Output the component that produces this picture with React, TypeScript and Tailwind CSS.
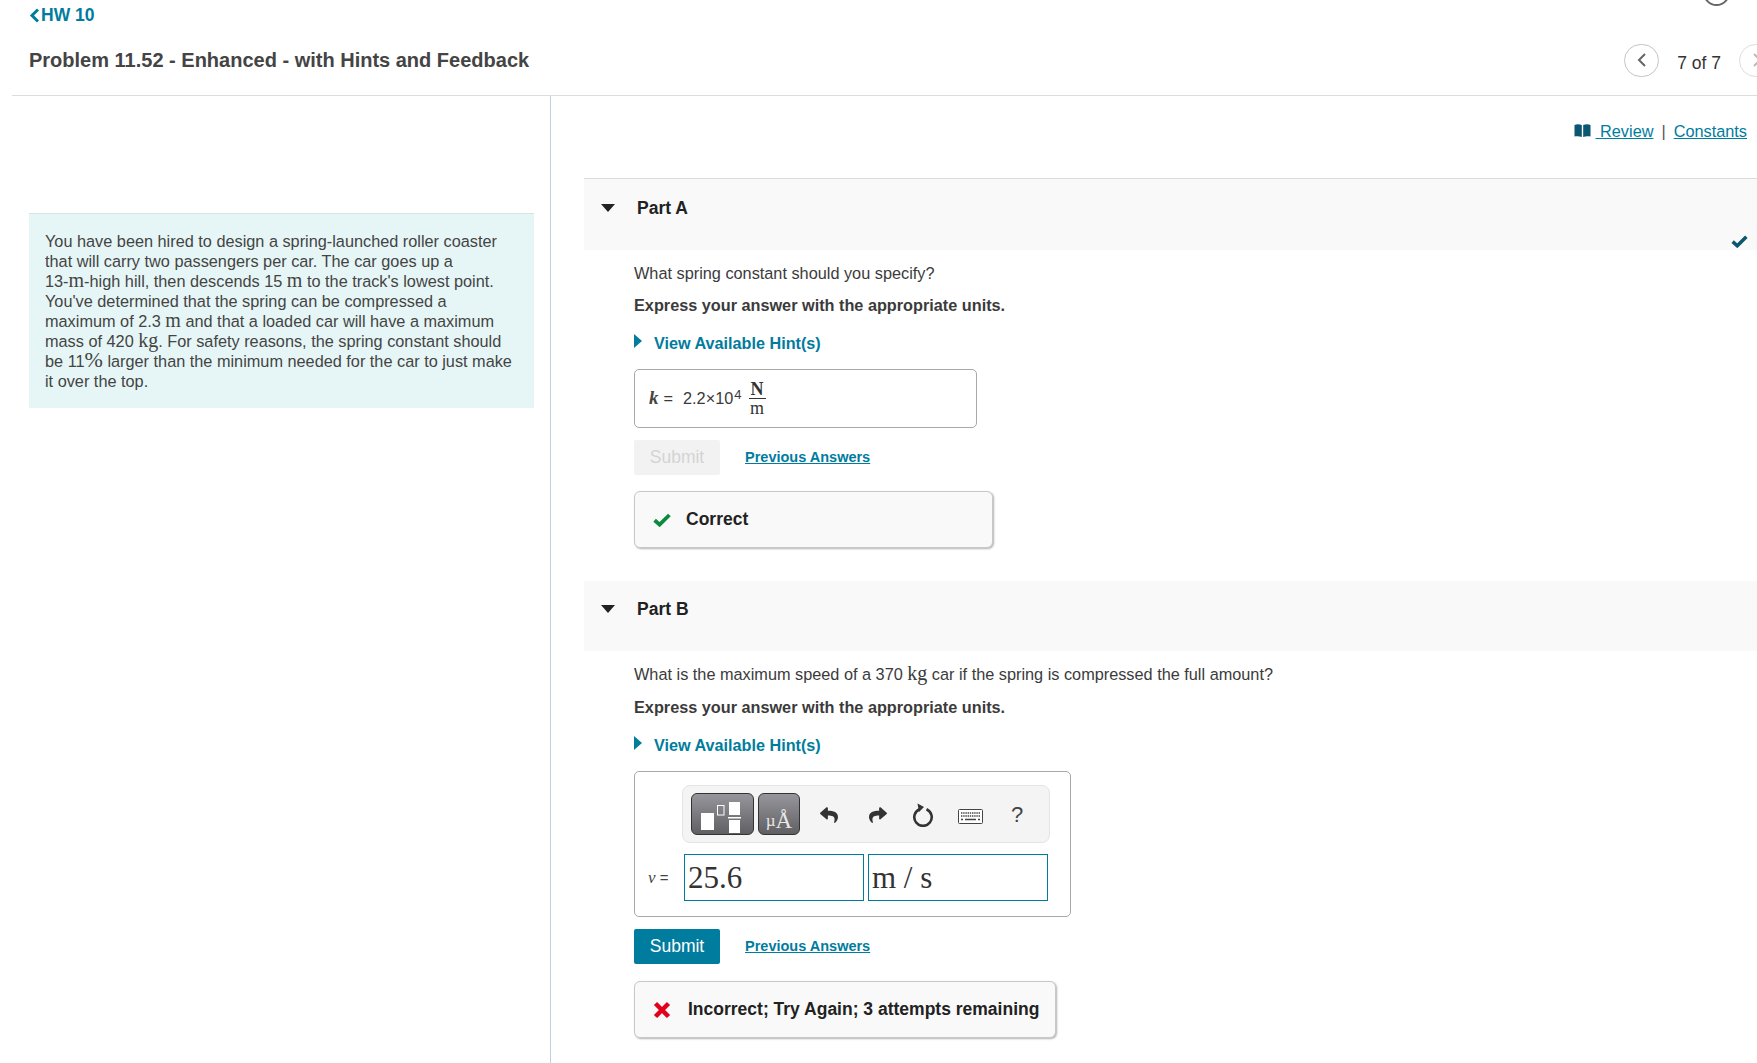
import React from "react";
import { FaReply, FaShare } from "react-icons/fa";

const Unit = ({ children }: { children: React.ReactNode }) => (
  <span className="font-['Liberation_Serif',serif] text-[20px] leading-[0]">{children}</span>
);

const CaretDown = () => (
  <svg width="14" height="8" viewBox="0 0 14 8" className="shrink-0">
    <path d="M0 0h14L7 8z" fill="#222" />
  </svg>
);

const CheckMark = ({ w, h, color }: { w: number; h: number; color: string }) => (
  <svg width={w} height={h} viewBox="0 0 18 14" className="shrink-0">
    <path d="M1.600 7.200L6.600 11.600 16.400 2" fill="none" stroke={color} strokeWidth="3.800" />
  </svg>
);

const Hint = () => (
  <div className="flex items-center h-[20px] mt-[18px]">
    <svg width="8" height="14" viewBox="0 0 8 14" className="shrink-0 -mt-[4px]">
      <path d="M0 0l8 7-8 7z" fill="#007c9e" />
    </svg>
    <a className="ml-[12px] font-bold text-[16.2px] text-[#007c9e]">View Available Hint(s)</a>
  </div>
);

const PartHeader = ({ title, box, done }: { title: string; box: string; done?: boolean }) => (
  <div className={`relative ${box} bg-[#f9f9f9] flex items-start pl-[17px]`}>
    <div className="mt-[6px]">
      <CaretDown />
    </div>
    <span className="ml-[22px] font-bold text-[17.5px] text-[#222] leading-[20px]">{title}</span>
    {done && (
      <div className="absolute right-[9px] bottom-[2px]">
        <CheckMark w={17} h={13} color="#0b5670" />
      </div>
    )}
  </div>
);

const PrevAnswers = () => (
  <a className="ml-[25px] text-[14.500px] font-bold underline text-[#007c9e]">Previous Answers</a>
);

const Feedback = ({ box, icon, iconGap, children }: { box: string; icon: React.ReactNode; iconGap: string; children: React.ReactNode }) => (
  <div className={`${box} h-[57px] flex items-center pl-[18px] rounded-[6px] bg-[#f9f9f9] border border-[#c8c8c8] shadow-[1px_1px_2px_rgba(0,0,0,0.3)]`}>
    {icon}
    <span className={`${iconGap} font-bold text-[17.5px] text-[#222]`}>{children}</span>
  </div>
);

const TemplatesIcon = () => (
  <svg width="61" height="40" viewBox="0 0 61 40">
    <rect x="9" y="19" width="13" height="17" fill="#fff" />
    <rect x="25.5" y="11.5" width="6.500" height="9.500" fill="none" stroke="#fff" strokeWidth="1" />
    <rect x="37" y="8" width="11" height="13" fill="#fff" />
    <rect x="36" y="23" width="13" height="1.500" fill="#fff" />
    <rect x="37" y="26" width="11" height="13" fill="#fff" />
  </svg>
);

const KeyboardIcon = () => (
  <svg width="25" height="15" viewBox="0 0 25 15">
    <rect x="0.5" y="0.5" width="24" height="14" rx="1" fill="#fff" stroke="#444" />
    <path d="M3 4h19M3 7h19" stroke="#444" strokeWidth="1.600" strokeDasharray="1.400 .8" />
    <path d="M3 10.500h2M7 10.500h11M20 10.500h2" stroke="#444" strokeWidth="1.600" />
  </svg>
);

const ResetIcon = () => (
  <svg width="22" height="24" viewBox="0 0 22 24">
    <path d="M7.500 6.200a8.700 8.700 0 1 0 7 0" fill="none" stroke="#333" strokeWidth="2.600" />
    <path d="M5.500 0.500l6.500 3.600-5 5z" fill="#333" />
  </svg>
);

const MathInput = ({ children }: { children: React.ReactNode }) => (
  <div className="w-[180px] h-[47px] border border-[#007c9e] pl-[3px] font-['Liberation_Serif',serif] text-[31px] leading-[45px] text-[#333]">
    {children}
  </div>
);

export default function App() {
  return (
    <div className="relative w-full h-[1063px] overflow-hidden bg-white text-[16.300px] text-[#3b3b3b] font-['Liberation_Sans',Arial,sans-serif]">
      {/* help circle cut off by the top of the page */}
      <div className="absolute left-[1703px] -top-[21px] w-[27px] h-[27px] rounded-full border-2 border-[#666]" />

      <header className="h-[96px] ml-[12px] border-b border-[#dcdcdc] relative">
        <a className="absolute left-[17px] top-[5px] flex items-center font-bold text-[17.500px] text-[#007c9e] leading-[20px]">
          <svg width="11" height="15" viewBox="0 0 11 15">
            <path d="M9 1.500L3 7.500l6 6" fill="none" stroke="#007c9e" strokeWidth="3" />
          </svg>
          <span className="ml-[1px]">HW 10</span>
        </a>
        <div className="flex items-center h-[34px] pt-[43px] box-content pl-[17px]">
          <h1 className="font-bold text-[20px] text-[#444] leading-[34px]">Problem 11.52 - Enhanced - with Hints and Feedback</h1>
          <div className="ml-auto flex items-center">
            <div className="w-[35px] h-[33px] rounded-full border border-[#c4c4c4] flex items-center justify-center">
              <svg width="10" height="16" viewBox="0 0 10 16">
                <path d="M8 2L2 8l6 6" fill="none" stroke="#666" strokeWidth="2" />
              </svg>
            </div>
            <span className="ml-[18px] mt-[6px] text-[17.500px] text-[#333]">7 of 7</span>
            <div className="ml-[18px] mr-[-17px] w-[35px] h-[33px] rounded-full border border-[#ddd] flex items-center justify-center">
              <svg width="10" height="16" viewBox="0 0 10 16">
                <path d="M2 2l6 6-6 6" fill="none" stroke="#bbb" strokeWidth="2" />
              </svg>
            </div>
          </div>
        </div>
      </header>

      <div className="flex h-[967px]">
        <aside className="w-[551px] shrink-0 border-r border-[#bfd0da] pl-[29px] pt-[117px]">
          <div className="w-[505px] h-[195px] bg-[#e6f6f6] border-t border-[#d9e2e2] px-[16px] pt-[17px] leading-[20px] text-[#444]">
            You have been hired to design a spring-launched roller coaster
            <br />
            that will carry two passengers per car. The car goes up a
            <br />
            13-<Unit>m</Unit>-high hill, then descends 15 <Unit>m</Unit> to the track's lowest point.
            <br />
            You've determined that the spring can be compressed a
            <br />
            maximum of 2.3 <Unit>m</Unit> and that a loaded car will have a maximum
            <br />
            mass of 420 <Unit>kg</Unit>. For safety reasons, the spring constant should
            <br />
            be 11<span className="font-['Liberation_Serif',serif] text-[22px] leading-[0]">%</span> larger than the minimum needed for the car to just make
            <br />
            it over the top.
          </div>
        </aside>

        <main className="flex-1 pl-[33px] min-w-0">
          <div className="h-[82px] flex justify-end items-start pt-[25px] pr-[10px] text-[#007c9e] leading-[20px]">
            <svg width="17" height="13" viewBox="0 0 16 13" className="mt-[3px] mr-[5px]">
              <path d="M0 1c2-1 5-1 7.300 0v12C5 12 2 12 0 12.600zM8.700 1c2.300-1 5.300-1 7.300 0v11.600c-2-.6-5-.6-7.300.4z" fill="#0b5670" />
            </svg>
            <a className="underline">&nbsp;Review</a>
            <span className="mx-[8px] text-[#555]">|</span>
            <a className="underline">Constants</a>
          </div>

          <section className="border-t border-[#dcdcdc]">
            <PartHeader title="Part A" box="h-[71px] pt-[19px]" done />
            <div className="pl-[50px]">
              <p className="mt-[13px] leading-[20px]">What spring constant should you specify?</p>
              <p className="mt-[12px] font-bold text-[16.250px] leading-[20px]">Express your answer with the appropriate units.</p>
              <Hint />
              <div className="mt-[16px] w-[343px] h-[59px] rounded-[5px] border border-[#a8a8a8] flex items-center pl-[14px]">
                <span className="font-['Liberation_Serif',serif] italic font-bold text-[19px] text-[#444]">k</span>
                <span className="ml-[5px]">=</span>
                <span className="ml-[10px]">2.2×10</span>
                <span className="text-[13px] -mt-[8px] ml-[1px]">4</span>
                <span className="ml-[7px] flex flex-col items-center font-['Liberation_Serif',serif] text-[18px] leading-[18px] text-[#333]">
                  <span className="font-bold px-[2px] border-b border-[#333]">N</span>
                  <span>m</span>
                </span>
              </div>
              <div className="mt-[12px] flex items-center">
                <button className="w-[86px] h-[35px] rounded-[2px] bg-[#f2f2f2] text-[17.500px] text-[#d4d4d4]">Submit</button>
                <PrevAnswers />
              </div>
              <Feedback box="w-[359px] mt-[16px]" iconGap="ml-[15px]" icon={<CheckMark w={18} h={14} color="#0a8a3c" />}>
                Correct
              </Feedback>
            </div>
          </section>

          <section className="mt-[33px]">
            <PartHeader title="Part B" box="h-[70px] pt-[18px]" />
            <div className="pl-[50px]">
              <p className="mt-[13px] leading-[20px]">
                What is the maximum speed of a 370 <Unit>kg</Unit> car if the spring is compressed the full amount?
              </p>
              <p className="mt-[13px] font-bold text-[16.250px] leading-[20px]">Express your answer with the appropriate units.</p>
              <Hint />
              <div className="mt-[16px] w-[437px] h-[146px] rounded-[5px] border border-[#a8a8a8] pt-[13px] pl-[13px]">
                <div className="ml-[34px] w-[368px] h-[58px] rounded-[8px] bg-[#f4f4f4] border border-[#e4e4e4] flex items-center pl-[8px]">
                  <div className="w-[63px] h-[42px] rounded-[6px] border border-[#333] bg-gradient-to-b from-[#96969c] to-[#606064]">
                    <TemplatesIcon />
                  </div>
                  <div className="ml-[4px] w-[42px] h-[42px] rounded-[6px] border border-[#333] bg-gradient-to-b from-[#96969c] to-[#606064] text-[#e8e8e8] font-['Liberation_Serif',serif] flex items-end justify-center leading-[26px]">
                    <span className="text-[17px]">µ</span>
                    <span className="text-[23px]">Å</span>
                  </div>
                  <FaReply className="ml-[20px] mt-[2px] text-[18px] text-[#333]" />
                  <FaShare className="ml-[31px] mt-[2px] text-[18px] text-[#333]" />
                  <div className="ml-[25px] mt-[2px]">
                    <ResetIcon />
                  </div>
                  <div className="ml-[24px] mt-[5px]">
                    <KeyboardIcon />
                  </div>
                  <span className="ml-[28px] text-[22px] text-[#444]">?</span>
                </div>
                <div className="mt-[11px] flex items-center">
                  <span className="w-[36px] text-[15px] text-[#444]">
                    <i className="font-['Liberation_Serif',serif] text-[17px]">v</i> =
                  </span>
                  <MathInput>25.6</MathInput>
                  <div className="w-[4px]" />
                  <MathInput>m / s</MathInput>
                </div>
              </div>
              <div className="mt-[12px] flex items-center">
                <button className="w-[86px] h-[35px] rounded-[2px] bg-[#007c9e] text-[17.500px] text-white">Submit</button>
                <PrevAnswers />
              </div>
              <Feedback
                box="w-[422px] mt-[17px]"
                iconGap="ml-[17px]"
                icon={
                  <svg width="18" height="18" viewBox="0 0 18 18" className="shrink-0">
                    <path d="M2.500 2.500l13 13M15.500 2.500l-13 13" fill="none" stroke="#e2001a" strokeWidth="4.500" />
                  </svg>
                }
              >
                Incorrect; Try Again; 3 attempts remaining
              </Feedback>
            </div>
          </section>
        </main>
      </div>
    </div>
  );
}
